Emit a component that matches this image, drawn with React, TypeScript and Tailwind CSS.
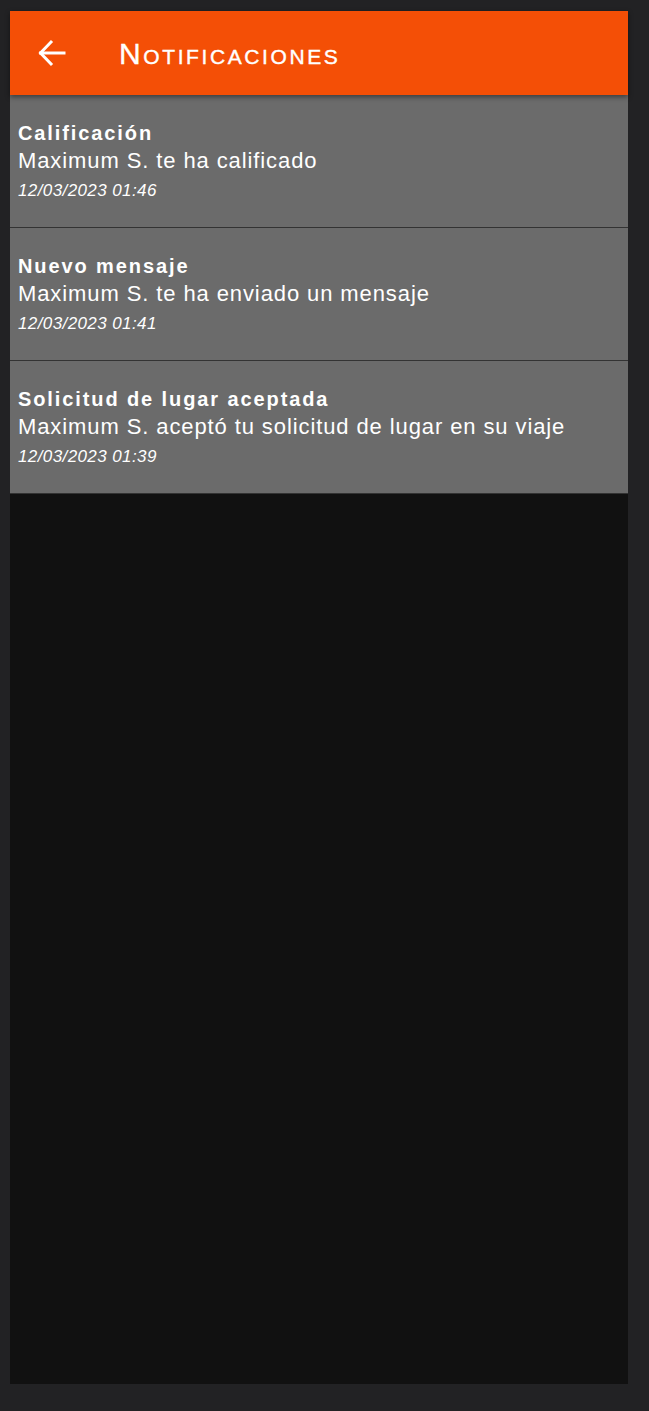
import React from "react";

const items = [
  { title: "Calificación", body: "Maximum S. te ha calificado", date: "12/03/2023 01:46" },
  { title: "Nuevo mensaje", body: "Maximum S. te ha enviado un mensaje", date: "12/03/2023 01:41" },
  { title: "Solicitud de lugar aceptada", body: "Maximum S. aceptó tu solicitud de lugar en su viaje", date: "12/03/2023 01:39" },
];

export default function App() {
  return (
    <div className="min-h-[1411px] w-full bg-[#222224] pt-[11px] pl-[10px]" style={{ fontFamily: '"Liberation Sans", Arial, sans-serif' }}>
      <div className="w-[618px] h-[1373px] bg-[#111111] flex flex-col">
        <div className="relative z-10 h-[84px] bg-[#f44f06] flex items-center shadow-[0_2px_5px_rgba(0,0,0,0.45)]">
          <div className="ml-[28px] w-[28px] h-[28px] flex items-center justify-center">
            <svg width="28" height="28" viewBox="0 0 28 28" fill="none" stroke="white" strokeWidth="3" strokeLinecap="square" strokeLinejoin="miter">
              <path d="M2.5 14 H26" />
              <path d="M13 3 L2.5 14 L13 25" />
            </svg>
          </div>
          <div className="ml-[53px] mt-[2px] text-white text-[30px] tracking-[2.6px] leading-none [font-variant:small-caps] [-webkit-text-stroke:0.4px_white]">
            Notificaciones
          </div>
        </div>
        {items.map((it) => (
          <div key={it.title} className="h-[133px] bg-[#6b6b6b] border-b border-[#333333] pt-[25px] px-[8px] text-white">
            <div className="text-[20px] leading-[27px] font-bold tracking-[1.9px]">{it.title}</div>
            <div className="text-[22px] leading-[28px] tracking-[0.9px]">{it.body}</div>
            <div className="mt-[2px] text-[17px] leading-[28px] italic tracking-[0.4px]">{it.date}</div>
          </div>
        ))}
      </div>
    </div>
  );
}
